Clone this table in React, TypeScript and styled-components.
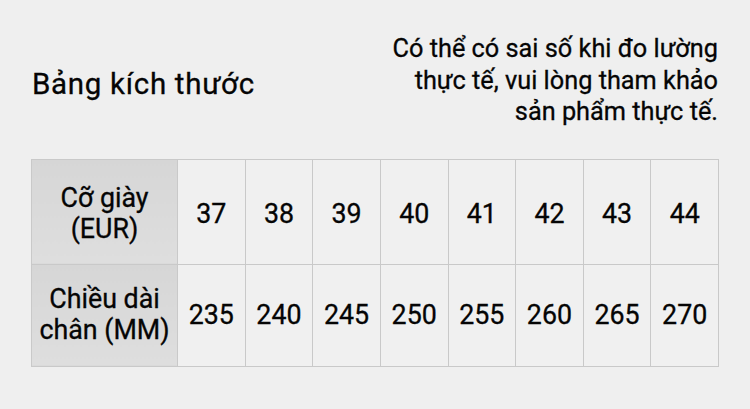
import styled, { createGlobalStyle } from "styled-components";

const sizes = [
  { eur: 37, mm: 235 },
  { eur: 38, mm: 240 },
  { eur: 39, mm: 245 },
  { eur: 40, mm: 250 },
  { eur: 41, mm: 255 },
  { eur: 42, mm: 260 },
  { eur: 43, mm: 265 },
  { eur: 44, mm: 270 },
];

export default function App() {
  return (
    <>
      <GlobalStyle />
      <Page>
        <Header>
          <Title>Bảng kích thước</Title>
          <Note>
            Có thể có sai số khi đo lường
            <br />
            thực tế, vui lòng tham khảo
            <br />
            sản phẩm thực tế.
          </Note>
        </Header>
        <Table>
          <tbody>
            <Row $height={105} $shift={5}>
              <LabelCell>
                Cỡ giày
                <br />
                (EUR)
              </LabelCell>
              {sizes.map(s => (
                <ValueCell key={s.eur}>{s.eur}</ValueCell>
              ))}
            </Row>
            <Row $height={102} $shift={0}>
              <LabelCell>
                Chiều dài
                <br />
                chân (MM)
              </LabelCell>
              {sizes.map(s => (
                <ValueCell key={s.mm}>{s.mm}</ValueCell>
              ))}
            </Row>
          </tbody>
        </Table>
      </Page>
    </>
  );
}

const GlobalStyle = createGlobalStyle`
  html, body {
    margin: 0;
    background: #efefef;
  }
  body {
    font-family: Roboto, "Noto Sans", sans-serif;
    color: #050505;
  }
`;

const Page = styled.main`
  width: 750px;
  height: 409px;
  box-sizing: border-box;
  padding: 33px 32px 0 31px;
`;

const Header = styled.header`
  display: flex;
  justify-content: space-between;
  align-items: center;
  margin-bottom: 31px;
`;

const Title = styled.h1`
  margin: 8px 0 0 1px;
  font-size: 29.5px;
  font-weight: 400;
  letter-spacing: 0.7px;
  line-height: 1;
  -webkit-text-stroke: 0.3px #050505;
`;

const Note = styled.p`
  margin: 0;
  font-size: 25.3px;
  font-weight: 400;
  line-height: 31.5px;
  text-align: right;
  -webkit-text-stroke: 0.3px #050505;
`;

const Table = styled.table`
  border-collapse: collapse;
  table-layout: fixed;
  width: 688px;
`;

const Row = styled.tr<{ $height: number; $shift: number }>`
  height: ${p => p.$height}px;

  td {
    padding-top: ${p => p.$shift}px;
  }
`;

const Cell = styled.td`
  box-sizing: border-box;
  border: 1.5px solid #c9c9c9;
  text-align: center;
  vertical-align: middle;
  font-size: 26.8px;
  font-weight: 400;
  line-height: 31px;
  padding: 0;
  -webkit-text-stroke: 0.3px #050505;
`;

const LabelCell = styled(Cell)`
  width: 146px;
  background: linear-gradient(180deg, #d6d6d6 0%, #dedede 100%);
`;

const ValueCell = styled(Cell)`
  background: #f0f0f0;
`;
